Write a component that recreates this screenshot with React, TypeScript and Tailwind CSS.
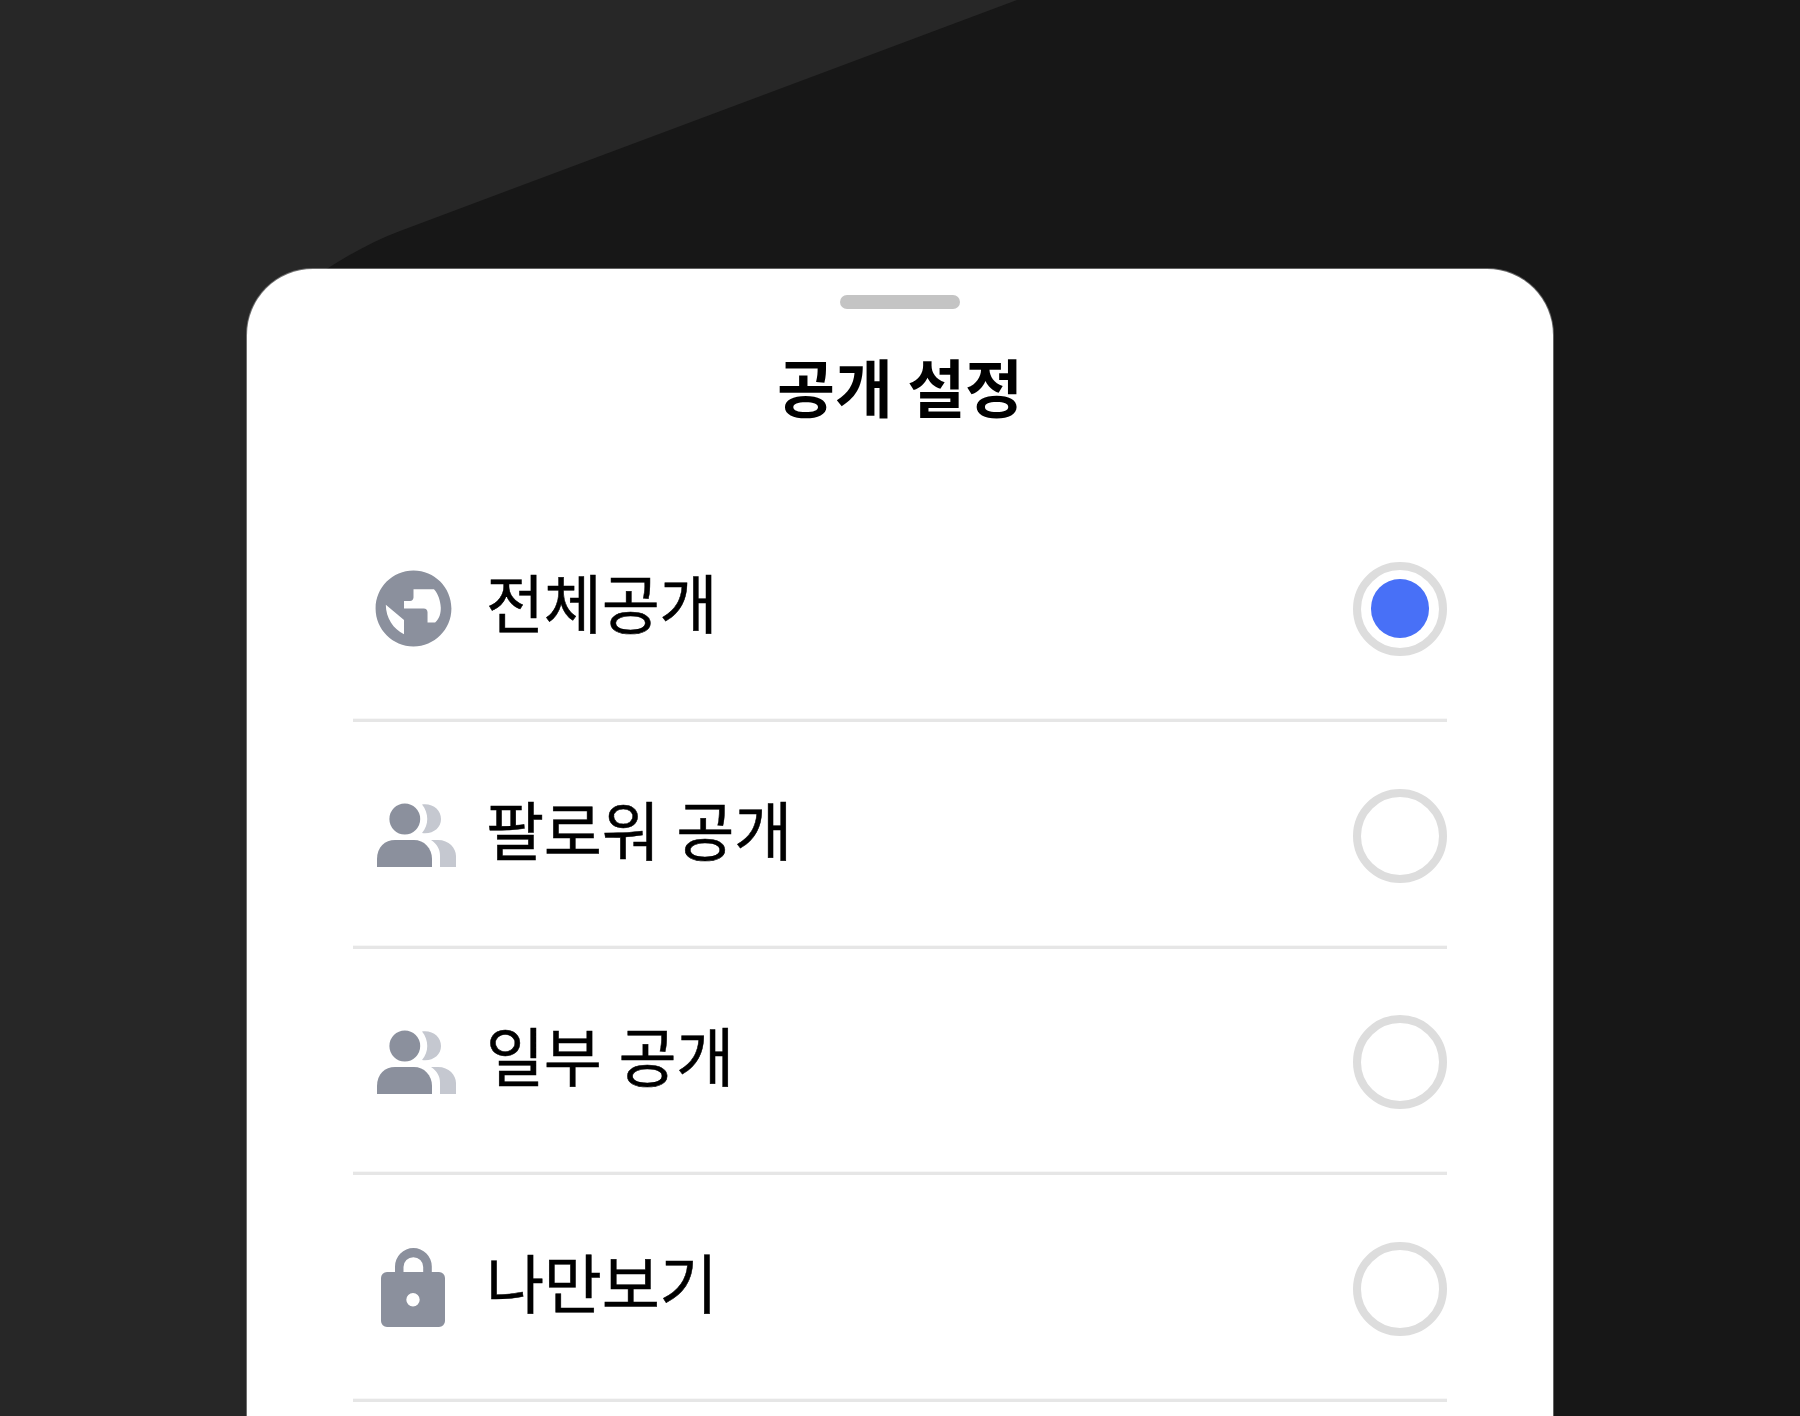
import type { ReactNode } from "react";

const GlobeIcon = () => (
  <svg className="size-[91px]" viewBox="0 0 24 24" fill="#8B909D">
    <path d="M12 2C6.480 2 2 6.480 2 12s4.480 10 10 10 10-4.480 10-10S17.520 2 12 2zM9.500 18.800C6.700 17.400 4.700 14.500 4.700 11l4.800 4zM17.700 15.700h-2v-2.700c0-.6-.4-1-1-1H9.500v-2h1.600c.5 0 .9-.4.9-.9V6.950h5.400c1.100 1.200 1.700 3 1.800 4.850 0 1.500-.3 2.800-1.500 3.900z" />
  </svg>
);

const PeopleIcon = () => (
  <svg className="h-[66px] w-[80px] shrink-0" viewBox="0 0 80 66">
    <g fill="#C5C8D0">
      <path d="M46 1.500C57 0 65 7 65 16S57 31.500 46 30C53 22 53 10 46 1.500z" />
      <path d="M55 37H62C73 37 80 45 80 53V64H64V53C64 46 61 41 55 37z" />
    </g>
    <g fill="#8B909D">
      <circle cx="28.800" cy="16" r="15.400" />
      <path d="M1 64V56C1 44 9 37 19 37H38C48 37 56 45 56 56V64z" />
    </g>
  </svg>
);

const LockIcon = () => (
  <svg className="h-[80px] w-[64px]" viewBox="0 0 64 80" fill="#8B909D">
    <path
      fillRule="evenodd"
      d="M14 24V18.500a18.400 18.400 0 0 1 36.800 0V24H58a6 6 0 0 1 6 6V73a6 6 0 0 1-6 6H6a6 6 0 0 1-6-6V30a6 6 0 0 1 6-6zM22.500 24H42.200V19a9.850 9.850 0 0 0-19.700 0zM32 45a6.700 6.700 0 1 0 0 13.400 6.700 6.700 0 0 0 0-13.400z"
    />
  </svg>
);

type Option = { label: string; icon: ReactNode; iconClass: string; rowClass: string };

const options: Option[] = [
  { label: "전체공개", icon: <GlobeIcon />, iconClass: "h-[92px] pl-[15px]", rowClass: "h-[227px] pt-[67px]" },
  { label: "팔로워 공개", icon: <PeopleIcon />, iconClass: "h-[94px] pl-[23px]", rowClass: "h-[227px] pt-[67px]" },
  { label: "일부 공개", icon: <PeopleIcon />, iconClass: "h-[95px] pl-[23px]", rowClass: "h-[226px] pt-[66px]" },
  { label: "나만보기", icon: <LockIcon />, iconClass: "h-[92px] pl-7", rowClass: "h-[227px] pt-[67px]" },
];

export default function App() {
  return (
    <div className="relative flex h-[1416px] w-[1800px] justify-center overflow-hidden bg-[#272727] pt-[269px] font-['Noto_Sans_CJK_KR','Noto_Sans',sans-serif] text-black">
      <svg className="absolute inset-0 size-full" viewBox="0 0 1800 1416">
        <path d="M1017 0L400 231C350 250 300 284 260 320V1416H1800V0z" fill="#171717" />
      </svg>
      <main className="relative h-[1147px] w-[1306px] rounded-t-[66px] bg-white px-[106px] shadow-[0_0_0_1px_rgba(255,255,255,0.33)]">
        <div className="mx-auto mt-[26px] h-[14px] w-[120px] rounded-full bg-[#c4c4c4]" />
        <h1 className="mt-[30px] h-[156px] text-center text-[63px] leading-[92px] font-bold">공개 설정</h1>
        <ul>
          {options.map((option, i) => (
            <li
              key={option.label}
              className={`flex items-start border-b-[3px] border-[#e6e6e6] shadow-[inset_0_-1px_0_#f7f7f7] ${option.rowClass}`}
            >
              <span className={`flex w-[133px] items-center ${option.iconClass}`}>{option.icon}</span>
              <span className="flex-1 text-[63.200px] leading-[78px] tracking-[-0.3px] [word-spacing:3px] [-webkit-text-stroke:0.5px_black]">
                {option.label}
              </span>
              <span className="flex size-[94px] items-center justify-center rounded-full border-8 border-[#ddd]">
                {i === 0 && <span className="-mt-px h-[59px] w-[58px] rounded-full bg-[#4870f7]" />}
              </span>
            </li>
          ))}
        </ul>
      </main>
    </div>
  );
}
